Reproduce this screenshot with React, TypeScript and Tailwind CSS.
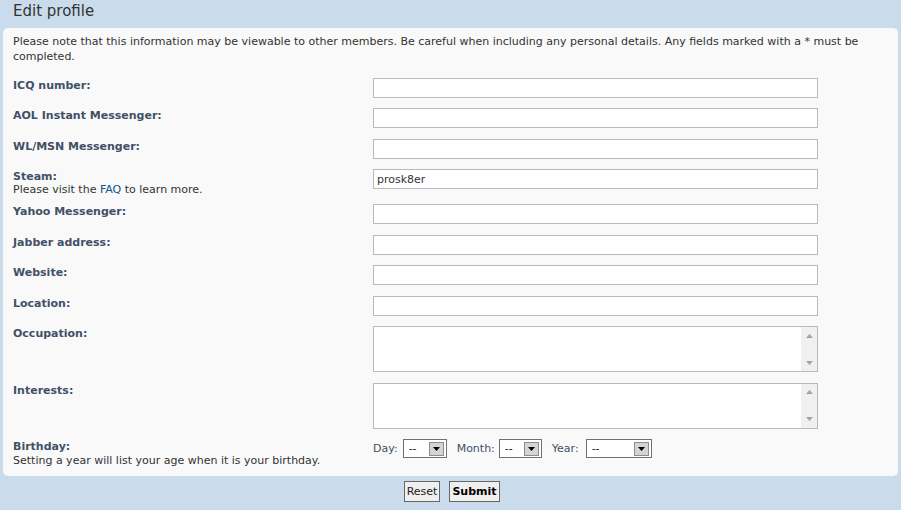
import type { ReactNode } from "react";

const labelCls = "w-[360px] shrink-0 pt-[1px] font-bold text-[#425067]";
const inputCls =
  "h-[20px] w-[445px] border border-[#b4bac0] bg-white px-[3px] text-[11px] text-[#333] outline-none";

function Row({ label, explain, children, className = "py-[5.25px]" }: {
  label: string;
  explain?: ReactNode;
  children: ReactNode;
  className?: string;
}) {
  return (
    <div className={`flex ${className}`}>
      <div className={labelCls}>
        {label}
        {explain && <div className="font-normal text-[#333]">{explain}</div>}
      </div>
      <div>{children}</div>
    </div>
  );
}

function TextBox() {
  return (
    <div className="flex h-[46px] w-[445px] border border-[#b4bac0] bg-white">
      <textarea className="flex-1 resize-none bg-white px-[3px] text-[11px] outline-none" />
      <div className="flex w-[16px] flex-col justify-between bg-[#f0f0f0]">
        <span className="flex h-[17px] items-center justify-center">
          <svg width="7" height="4" viewBox="0 0 7 4">
            <path d="M3.5 0L7 4H0z" fill="#a3a3a3" />
          </svg>
        </span>
        <span className="flex h-[17px] items-center justify-center">
          <svg width="7" height="4" viewBox="0 0 7 4">
            <path d="M0 0h7L3.5 4z" fill="#a3a3a3" />
          </svg>
        </span>
      </div>
    </div>
  );
}

function FakeSelect({ width }: { width: string }) {
  return (
    <div className={`flex h-[19px] items-center justify-between border border-[#707070] bg-white pl-[5px] pr-[2px] text-[#222] ${width}`}>
      <span>--</span>
      <span className="flex h-[14px] w-[15px] items-center justify-center border border-[#8c8c8c] bg-[#d4d4d4]">
        <svg width="7" height="4" viewBox="0 0 7 4">
          <path d="M0 0h7L3.5 4z" fill="#000" />
        </svg>
      </span>
    </div>
  );
}

export default function App() {
  return (
    <div className="h-[510px] w-[901px] overflow-hidden bg-[#cadceb] font-['DejaVu_Sans',Verdana,sans-serif] text-[11px] leading-[1.2] text-[#333]">
      <h2 className="h-[28px] pl-[13px] pt-[1px] text-[15px] leading-[20px] text-[#333]">Edit profile</h2>

      <div className="mx-[3px] rounded-[5px] bg-[#f9f9f9] pb-[9px] pl-[10px] pr-[10px] pt-[6px]">
        <p className="mb-[8.5px] leading-[15px]">
          Please note that this information may be viewable to other members. Be careful when including any personal details. Any fields marked with a * must be completed.
        </p>

        <Row label="ICQ number:"><input className={inputCls} /></Row>
        <Row label="AOL Instant Messenger:"><input className={inputCls} /></Row>
        <Row label="WL/MSN Messenger:"><input className={inputCls} /></Row>
        <Row
          label="Steam:"
          className="pt-[5.25px] pb-[2.5px]"
          explain={<>Please visit the <a className="text-[#105289]">FAQ</a> to learn more.</>}
        >
          <input className={inputCls} defaultValue="prosk8er" />
        </Row>
        <Row label="Yahoo Messenger:"><input className={inputCls} /></Row>
        <Row label="Jabber address:"><input className={inputCls} /></Row>
        <Row label="Website:"><input className={inputCls} /></Row>
        <Row label="Location:"><input className={inputCls} /></Row>
        <Row label="Occupation:" className="pt-[5.25px] pb-[5.25px]"><TextBox /></Row>
        <Row label="Interests:" className="pt-[5.25px] pb-[5.5px]"><TextBox /></Row>
        <Row
          label="Birthday:"
          className="pt-[5px]"
          explain="Setting a year will list your age when it is your birthday."
        >
          <div className="flex items-center text-[#425067]">
            <span className="mr-[5px]">Day:</span>
            <FakeSelect width="w-[44px]" />
            <span className="ml-[10px] mr-[4px]">Month:</span>
            <FakeSelect width="w-[43px]" />
            <span className="ml-[10px] mr-[7px]">Year:</span>
            <FakeSelect width="w-[66px]" />
          </div>
        </Row>
      </div>

      <div className="mt-[5px] flex justify-center gap-[9px] pl-[3px]">
        <button className="h-[21px] w-[36px] border border-[#666] bg-[#efefef] text-[11px] text-[#222]">Reset</button>
        <button className="h-[21px] w-[51px] border border-[#666] bg-[#efefef] text-[11px] font-bold text-[#000]">Submit</button>
      </div>
    </div>
  );
}
